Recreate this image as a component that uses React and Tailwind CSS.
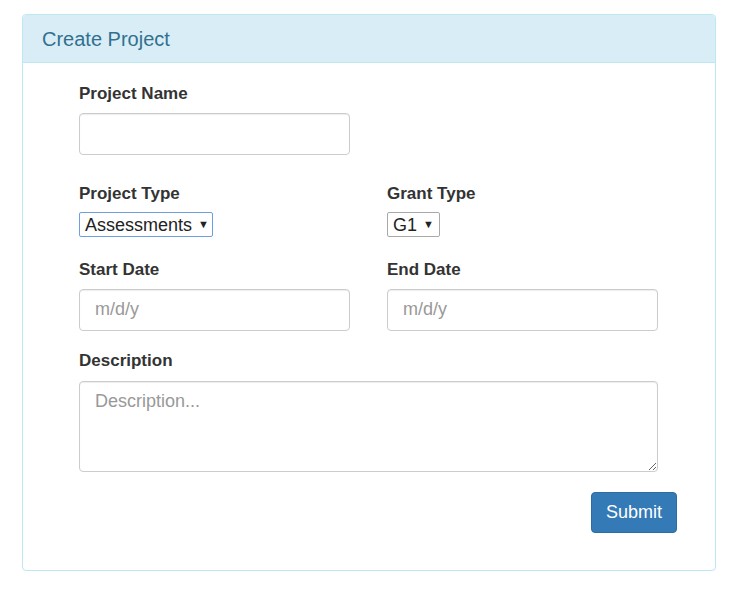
export default function App() {
  const font = { fontFamily: '"Liberation Sans", Arial, sans-serif' };

  return (
    <div className="min-h-[614px] bg-white pt-[14px] pl-[22px]" style={font}>
      <div className="w-[694px] h-[557px] border border-[#bce8f1] rounded-[4px] bg-white overflow-hidden">
        <div className="h-[48px] bg-[#d9edf7] border-b border-[#bce8f1] flex items-center pl-[19px]">
          <h3 className="text-[20px] text-[#31708f] leading-none">Create Project</h3>
        </div>

        <div className="pl-[56px] pt-[21px] text-[#333]">
          <label className="block text-[17px] font-bold leading-[20px] h-[20px]">Project Name</label>
          <input
            type="text"
            className="mt-[9px] block w-[271px] h-[42px] border border-[#ccc] rounded-[4px] px-[15px] text-[18px] outline-none shadow-[inset_0_1px_1px_rgba(0,0,0,0.075)]"
          />

          <div className="mt-[29px] flex">
            <div className="w-[308px]">
              <label className="block text-[17px] font-bold leading-[20px] h-[20px]">Project Type</label>
              <div className="mt-[8px] inline-flex items-center h-[25px] w-[134px] border border-[#6f9fe0] rounded-[2px] pl-[5px] text-[18px] text-[#222] leading-none">
                <span>Assessments</span>
                <span className="ml-[6px] text-[11px]">▼</span>
              </div>
            </div>
            <div>
              <label className="block text-[17px] font-bold leading-[20px] h-[20px]">Grant Type</label>
              <div className="mt-[8px] inline-flex items-center h-[25px] w-[53px] border border-[#a9a9a9] rounded-[2px] pl-[5px] text-[18px] text-[#222] leading-none">
                <span>G1</span>
                <span className="ml-[6px] text-[11px]">▼</span>
              </div>
            </div>
          </div>

          <div className="mt-[22px] flex">
            <div className="w-[308px]">
              <label className="block text-[17px] font-bold leading-[20px] h-[20px]">Start Date</label>
              <input
                type="text"
                placeholder="m/d/y"
                className="mt-[9px] block w-[271px] h-[42px] border border-[#ccc] rounded-[4px] px-[15px] text-[18px] outline-none placeholder:text-[#999] shadow-[inset_0_1px_1px_rgba(0,0,0,0.075)]"
              />
            </div>
            <div>
              <label className="block text-[17px] font-bold leading-[20px] h-[20px]">End Date</label>
              <input
                type="text"
                placeholder="m/d/y"
                className="mt-[9px] block w-[271px] h-[42px] border border-[#ccc] rounded-[4px] px-[15px] text-[18px] outline-none placeholder:text-[#999] shadow-[inset_0_1px_1px_rgba(0,0,0,0.075)]"
              />
            </div>
          </div>

          <label className="mt-[20px] block text-[17px] font-bold leading-[20px] h-[20px]">Description</label>
          <textarea
            placeholder="Description..."
            className="mt-[10px] block w-[579px] h-[91px] border border-[#ccc] rounded-[4px] px-[15px] py-[7px] text-[18px] leading-[24px] outline-none placeholder:text-[#999] shadow-[inset_0_1px_1px_rgba(0,0,0,0.075)]"
          />

          <div className="w-[598px] flex justify-end mt-[20px]">
            <button className="h-[41px] w-[86px] bg-[#337ab7] border border-[#2e6da4] rounded-[4px] text-white text-[18px]">
              Submit
            </button>
          </div>
        </div>
      </div>
    </div>
  );
}
